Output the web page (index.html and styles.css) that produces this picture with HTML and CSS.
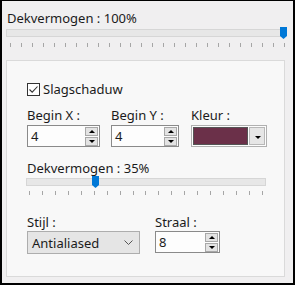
FILE: index.html
```html
<!DOCTYPE html>
<html lang="nl">
<head>
    <meta charset="UTF-8">
    <title>Slagschaduw</title>
    <link rel="stylesheet" href="styles.css">
</head>
<body>
    <div class="window">
        <div class="title">Dekvermogen : 100%</div>
        <div class="slider slider-main">
            <div class="track">
                <svg class="thumb thumb-main" width="7" height="12" viewBox="0 0 7 12"><path d="M0 0H7V9L3.5 12L0 9Z" fill="#0078d7"/></svg>
            </div>
            <div class="ticks ticks-main"></div>
        </div>

        <div class="group">
            <label class="check">
                <span class="box">
                    <svg width="11" height="11" viewBox="0 0 11 11"><path d="M1.5 5.5L4.2 8.2L9.5 2.5" fill="none" stroke="#333" stroke-width="1.1"/></svg>
                </span>
                Slagschaduw
            </label>

            <div class="fields">
                <div class="field">
                    <div class="label">Begin X :</div>
                    <div class="spin spin-x">
                        <span class="value">4</span>
                        <span class="arrows">
                            <span class="arrow up"></span>
                            <span class="arrow down"></span>
                        </span>
                    </div>
                </div>
                <div class="field">
                    <div class="label">Begin Y :</div>
                    <div class="spin spin-y">
                        <span class="value">4</span>
                        <span class="arrows">
                            <span class="arrow up"></span>
                            <span class="arrow down"></span>
                        </span>
                    </div>
                </div>
                <div class="field">
                    <div class="label">Kleur :</div>
                    <div class="color">
                        <span class="swatch"></span>
                        <span class="drop"></span>
                    </div>
                </div>
            </div>

            <div class="label opacity-label">Dekvermogen : 35%</div>
            <div class="slider slider-sub">
                <div class="track">
                    <svg class="thumb thumb-sub" width="7" height="12" viewBox="0 0 7 12"><path d="M0 0H7V9L3.5 12L0 9Z" fill="#0078d7"/></svg>
                </div>
                <div class="ticks ticks-sub"></div>
            </div>

            <div class="bottom">
                <div class="field">
                    <div class="label">Stijl :</div>
                    <div class="select">
                        <span>Antialiased</span>
                        <svg width="9" height="5" viewBox="0 0 9 5"><path d="M0.5 0.5L4.5 4.5L8.5 0.5" fill="none" stroke="#555" stroke-width="1"/></svg>
                    </div>
                </div>
                <div class="field">
                    <div class="label">Straal :</div>
                    <div class="spin spin-r">
                        <span class="value">8</span>
                        <span class="arrows">
                            <span class="arrow up"></span>
                            <span class="arrow down"></span>
                        </span>
                    </div>
                </div>
            </div>
        </div>
    </div>

    <script>
        // tick marks under both sliders
        function addTicks(el, count) {
            for (let i = 0; i < count; i++) {
                el.appendChild(document.createElement('span'));
            }
        }
        addTicks(document.querySelector('.ticks-main'), 26);
        addTicks(document.querySelector('.ticks-sub'), 19);
    </script>
</body>
</html>
```

FILE: styles.css
```css
* {
    box-sizing: border-box;
}
body {
    margin: 0;
    font-family: "Noto Sans", sans-serif;
    font-size: 13px;
    color: #1b1b1b;
    background-color: #000;
}
.window {
    width: 295px;
    height: 285px;
    border-style: solid;
    border-color: #000;
    border-width: 1px 2px 2px 2px;
    background-color: #f0eff0;
    overflow: hidden;
}
.title {
    padding: 9px 0 0 5px;
    line-height: 16px;
}
.slider {
    position: relative;
}
.slider-main {
    margin: 3px 8px 0 4px;
}
.track {
    position: relative;
    height: 8px;
    background-color: #e7e7e7;
    border: 1px solid #d6d6d6;
}
.thumb {
    position: absolute;
    top: -3px;
    display: block;
}
.thumb-main {
    right: -3px;
}
.thumb-sub {
    left: 65px;
}
.ticks {
    display: flex;
    justify-content: space-between;
    height: 4px;
}
.ticks span {
    width: 1px;
    height: 4px;
    background-color: #a6a6a6;
}
.ticks-main {
    margin-top: 6px;
    padding: 0 0 0 4px;
}
.ticks-sub {
    margin-top: 5px;
    padding: 0 3px 0 3px;
}
.group {
    margin: 13px 8px 0 4px;
    height: 217px;
    background-color: #f8f8f8;
    border: 1px solid #dadada;
    padding: 20px 0 0 20px;
}
.check {
    display: flex;
    align-items: center;
    gap: 3px;
    line-height: 16px;
}
.box {
    width: 13px;
    height: 13px;
    border: 1px solid #333;
    background-color: #fff;
    display: flex;
    align-items: center;
    justify-content: center;
}
.box svg {
    display: block;
}
.label {
    line-height: 16px;
    margin-bottom: 2px;
}
.fields {
    display: flex;
    margin-top: 10px;
}
.field:nth-child(2) {
    margin-left: 11px;
}
.field:nth-child(3) {
    margin-left: 12px;
}
.spin {
    height: 22px;
    border: 1px solid #8a8a8a;
    background-color: #fdfdfd;
    display: flex;
    justify-content: space-between;
    align-items: center;
    padding: 0 1px 0 3px;
}
.spin-x {
    width: 73px;
}
.spin-y {
    width: 68px;
}
.spin-r {
    width: 65px;
}
.value {
    line-height: 16px;
}
.arrows {
    display: flex;
    flex-direction: column;
    gap: 1px;
}
.arrow {
    position: relative;
    width: 13px;
    height: 9px;
    background-color: #e3e3e3;
    border: 1px solid #a8a8a8;
}
.arrow::after {
    content: "";
    position: absolute;
    left: 3px;
    border-left: 3px solid transparent;
    border-right: 3px solid transparent;
}
.arrow.up::after {
    top: 2px;
    border-bottom: 3px solid #000;
}
.arrow.down::after {
    top: 2px;
    border-top: 3px solid #000;
}
.color {
    width: 76px;
    height: 22px;
    border: 1px solid #b0b0b0;
    background-color: #fdfdfd;
    display: flex;
    padding: 1px;
    gap: 1px;
}
.swatch {
    width: 55px;
    background-color: #6b3049;
    border: 1px solid #555;
}
.drop {
    position: relative;
    flex: 1;
    background-color: #e6e6e6;
    border: 1px solid #b8b8b8;
}
.drop::after {
    content: "";
    position: absolute;
    left: 5px;
    top: 8px;
    border-left: 3px solid transparent;
    border-right: 3px solid transparent;
    border-top: 3px solid #000;
}
.opacity-label {
    margin-top: 13px;
}
.slider-sub {
    width: 240px;
    margin-top: 1px;
    margin-left: -1px;
}
.bottom {
    display: flex;
    margin-top: 19px;
}
.bottom .label {
    margin-bottom: 1px;
}
.bottom .field:nth-child(2) {
    margin-left: 15px;
}
.select {
    width: 113px;
    height: 23px;
    background-color: #e5e5e5;
    border: 1px solid #adadad;
    display: flex;
    align-items: center;
    justify-content: space-between;
    padding: 0 6px 0 4px;
}
.select svg {
    display: block;
}
```
